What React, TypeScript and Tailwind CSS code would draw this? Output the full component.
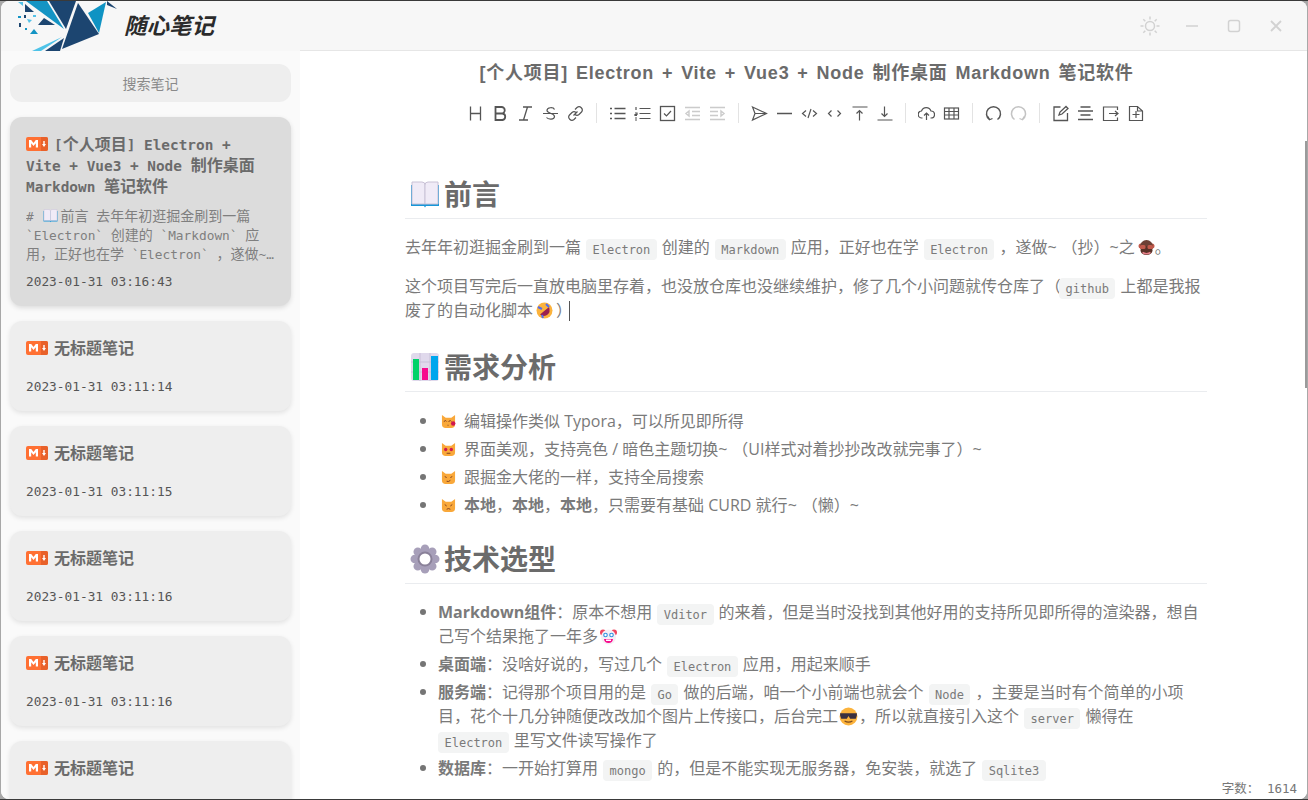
import React from "react";

const BODY = "font-['Open_Sans','Noto_Sans_CJK_SC',sans-serif]";
const MONO = "font-['DejaVu_Sans_Mono','Noto_Sans_CJK_SC',monospace]";

function Md({ className = "" }: { className?: string }) {
  return (
    <svg width="22" height="14" viewBox="0 0 22 14" className={`shrink-0 ${className}`}>
      <rect width="22" height="14" rx="2" fill="#ff7033" />
      <path d="M15 0h5a2 2 0 0 1 2 2v10a2 2 0 0 1-2 2h-5z" fill="#e8612a" />
      <path d="M3 10.500V3h2.200L7.500 6 9.800 3H12v7.500H9.800V6.300L7.500 9 5.200 6.300v4.200z" fill="#fff" />
      <path d="M18 4v3.500" stroke="#fff" strokeWidth="1.400" />
      <path d="M16 7h4l-2 3z" fill="#fff" />
    </svg>
  );
}

function Logo() {
  return (
    <svg width="120" height="50" viewBox="0 0 120 50" className="shrink-0">
      <polygon points="17,1 22,1 22,5" fill="#54c2e8" />
      <polygon points="25,0 46,0 63,28" fill="#1494c4" />
      <polygon points="48,0 75,0 65,28" fill="#1c4570" />
      <polygon points="77,2 98,33 61,48" fill="#1c4570" />
      <polygon points="87,12 105,1 98,32" fill="#0f93c3" />
      <polygon points="106,0 116,8 106,4" fill="#1c4570" />
      <polygon points="24,3 33,11 24,11" fill="#1c4570" />
      <polygon points="37,24 43,17 54,24" fill="#1c4570" />
      <polygon points="29,33 33,28 37,33" fill="#1494c4" />
      <polygon points="31,50 61,36 40,50" fill="#4fc3e8" />
      <polygon points="44,50 63,37 59,50" fill="#1c4570" />
      <polygon points="26,18 31,19 28,22" fill="#54c2e8" />
      <rect x="17" y="15" width="3" height="2" fill="#1494c4" />
      <rect x="23" y="14" width="2" height="3" fill="#1c4570" />
      <rect x="32" y="14" width="3" height="2" fill="#54c2e8" />
      <rect x="18" y="22" width="2" height="4" fill="#1c4570" />
      <rect x="24" y="27" width="2" height="2" fill="#1494c4" />
    </svg>
  );
}

function Book({ s = 30, className = "" }: { s?: number; className?: string }) {
  return (
    <svg width={s} height={s} viewBox="0 0 30 30" className={`inline-block shrink-0 ${className}`}>
      <path d="M1 6v21h13l1 1.500 1-1.500h13V6z" fill="#1896d8" />
      <path d="M2 3h10a3 3 0 0 1 3 3v19H2z" fill="#f0ebf7" stroke="#c9c2d6" />
      <path d="M28 3H18a3 3 0 0 0-3 3v19h13z" fill="#f0ebf7" stroke="#c9c2d6" />
    </svg>
  );
}
function Chart() {
  return (
    <svg width="30" height="30" viewBox="0 0 30 30" className="inline-block shrink-0">
      <rect x="1" y="1" width="28" height="28" rx="3" fill="#e0d9ec" />
      <path d="M1 10h28M1 20h28M10 1v28M20 1v28" stroke="#c9c0d8" />
      <rect x="3" y="7" width="6" height="21" fill="#00d26a" />
      <rect x="12" y="16" width="6" height="12" fill="#f70a8d" />
      <rect x="21" y="4" width="7" height="24" fill="#00a6ed" />
    </svg>
  );
}
function Gear() {
  const teeth = [0, 45, 90, 135, 180, 225, 270, 315];
  return (
    <svg width="30" height="30" viewBox="0 0 30 30" className="inline-block shrink-0">
      {teeth.map((a) => (
        <circle key={a} cx="15" cy="4.800" r="4.300" fill="#a79fb9" transform={`rotate(${a} 15 15)`} />
      ))}
      <circle cx="15" cy="15" r="10" fill="#a79fb9" />
      <circle cx="15" cy="15" r="7.500" fill="#8a8199" />
      <circle cx="15" cy="15" r="5.500" fill="#fff" />
    </svg>
  );
}
function Monkey() {
  return (
    <svg width="17" height="17" viewBox="0 0 17 17" className="ml-[3px] inline-block align-[-3px]">
      <circle cx="3" cy="7" r="2.500" fill="#c25a4c" />
      <circle cx="14" cy="7" r="2.500" fill="#c25a4c" />
      <circle cx="8.500" cy="7.500" r="6.500" fill="#6d4035" />
      <ellipse cx="8.500" cy="11.500" rx="6" ry="4.500" fill="#5a3228" />
      <path d="M4.500 13.500q4 2.500 8 0" stroke="#e8808a" strokeWidth="1.500" fill="none" />
      <rect x="2" y="6" width="5.500" height="4" rx="1.500" fill="#c25a4c" />
      <rect x="9.500" y="6" width="5.500" height="4" rx="1.500" fill="#c25a4c" />
    </svg>
  );
}
function Rofl() {
  return (
    <svg width="17" height="17" viewBox="0 0 17 17" className="mx-[3px] inline-block align-[-3px]">
      <circle cx="8.500" cy="8.500" r="8" fill="#fcb33c" />
      <path d="M4 12.500L13 5q2 5-2 8-4 2-7-.5z" fill="#9a2050" />
      <path d="M2 5l4 2M6 13l1 3M10 2l3 3" stroke="#4f6cf0" strokeWidth="2" />
    </svg>
  );
}
function Clown() {
  return (
    <svg width="17" height="17" viewBox="0 0 17 17" className="ml-[2px] inline-block align-[-3px]">
      <circle cx="3" cy="4.500" r="3" fill="#f0435e" />
      <circle cx="14" cy="4.500" r="3" fill="#f0435e" />
      <circle cx="8.500" cy="9" r="7.500" fill="#f6eef4" />
      <circle cx="5.500" cy="7" r="2.300" fill="#2f8fe0" />
      <circle cx="11.500" cy="7" r="2.300" fill="#2f8fe0" />
      <circle cx="5.500" cy="7" r="1.200" fill="#fff" />
      <circle cx="11.500" cy="7" r="1.200" fill="#fff" />
      <path d="M4 11h9q-.500 4-4.500 4T4 11z" fill="#f70a8d" />
      <rect x="6" y="11.500" width="5" height="1.500" fill="#fff" />
    </svg>
  );
}
function Cool() {
  return (
    <svg width="19" height="19" viewBox="0 0 17 17" className="mx-[1px] inline-block align-[-4px]">
      <circle cx="8.500" cy="8.500" r="8" fill="#fcb33c" />
      <path d="M1 5.500h15v2l-1 3H10L8.500 8 7 10.500H2L1 7.500z" fill="#3a3040" />
      <path d="M5 12.500q3.500 2 7 0" stroke="#7a4a20" fill="none" />
    </svg>
  );
}
function Cat({ face }: { face: "kiss" | "heart" | "smirk" | "pout" }) {
  return (
    <svg width="15" height="15" viewBox="0 0 16 16" className="shrink-0">
      <path d="M1 1l4 3h6l4-3v10a4 4 0 0 1-4 4H5a4 4 0 0 1-4-4z" fill="#f9a83a" />
      {face === "heart" ? (
        <>
          <circle cx="5" cy="8" r="1.800" fill="#d0184f" />
          <circle cx="11" cy="8" r="1.800" fill="#d0184f" />
          <path d="M6 12h4" stroke="#7a3a20" />
        </>
      ) : face === "kiss" ? (
        <>
          <path d="M3 8l2-1 1 1M8 8l2-1 1 1M7 12h1" stroke="#7a3a20" fill="none" />
          <circle cx="13" cy="10" r="2.400" fill="#d0184f" />
        </>
      ) : face === "smirk" ? (
        <path d="M4 7l2 1M10 8l2-1M6 12q2 1 4-1" stroke="#7a3a20" fill="none" />
      ) : (
        <path d="M4 7l2 1.500M12 7l-2 1.500M6 12q2-1.500 4 0" stroke="#7a3a20" fill="none" />
      )}
    </svg>
  );
}

const ic = "#555";
function Tool({ children, o = 1 }: { children: React.ReactNode; o?: number }) {
  return (
    <svg width="17" height="17" viewBox="0 0 17 17" fill="none" stroke={ic} strokeWidth="1.200" style={{ opacity: o }} className="shrink-0">
      {children}
    </svg>
  );
}
function Sep() {
  return <span className="mx-[12px] h-[20px] w-px shrink-0 bg-[#e3e3e3]" />;
}

const toolbar: React.ReactNode[][] = [
  [
    <Tool><path d="M3.500 1.500v14M13.500 1.500v14M3.500 8.500h10" strokeWidth="1.300" /></Tool>,
    <Tool><path d="M3.500 2h6a3 3 0 0 1 0 6.500h-6zM3.500 8.500h7a3.300 3.300 0 0 1 0 6.500h-7z" strokeWidth="1.800" /></Tool>,
    <Tool><path d="M6 2h9M2 15h9M10.500 2l-4 13" strokeWidth="1.300" /></Tool>,
    <Tool><path d="M1 8.500h15M12.500 4.500C11.500 2 5 2 5 5.500c0 3 7.500 2.500 7.500 6 0 3.500-6.500 3-8 1" /></Tool>,
    <Tool><path d="M6.500 10.500l4-4M8 4.500l2-2a3.200 3.200 0 0 1 4.500 4.500L12 9.500a3.200 3.200 0 0 1-4 0M9 12.500l-2 2A3.200 3.200 0 0 1 2.500 10L5 7.500a3.200 3.200 0 0 1 4 0" /></Tool>,
  ],
  [
    <Tool><path d="M5.500 3.500h11M5.500 8.500h11M5.500 13.500h11M1 3.500h2M1 8.500h2M1 13.500h2" strokeWidth="1.300" /></Tool>,
    <Tool><path d="M5.500 3.500h11M5.500 8.500h11M5.500 13.500h11M2 2v3M1 8h2v1.500H1v1h2M1 13h2M1 15h2" /></Tool>,
    <Tool><rect x="1.500" y="1.500" width="14" height="14" strokeWidth="1.300" /><path d="M5 8.500l2.500 2.500L12 6" /></Tool>,
    <Tool o={0.3}><path d="M1 2.500h15M8 6.500h8M8 10.500h8M1 14.500h15M5 6L2 8.500 5 11z" strokeWidth="1.400" /></Tool>,
    <Tool o={0.3}><path d="M1 2.500h15M1 6.500h8M1 10.500h8M1 14.500h15M12 6l3 2.500-3 2.500z" strokeWidth="1.400" /></Tool>,
  ],
  [
    <Tool><path d="M1.500 2L15.500 8.500 1.500 15 4 8.500zM4 8.500h11.500" /></Tool>,
    <Tool><path d="M1 8.500h15" strokeWidth="1.500" /></Tool>,
    <Tool><path d="M5 5.500L1.500 8.500 5 11.500M12 5.500l3.500 3-3.500 3M10 4l-3 9" /></Tool>,
    <Tool><path d="M5.500 5.500L2.500 8.500l3 3M11.500 5.500l3 3-3 3" /></Tool>,
    <Tool><path d="M1.500 2h15M8.500 15.500V5.500M5.500 8.500l3-3 3 3" /></Tool>,
    <Tool><path d="M1.500 15h15M8.500 1.500v10M5.500 8.500l3 3 3-3" /></Tool>,
  ],
  [
    <Tool><path d="M4.500 13H4a3.500 3.500 0 0 1-.5-7A5 5 0 0 1 13 6a3.500 3.500 0 0 1 0 7h-.5M8.500 15V8.500M6 10.500l2.500-2.500 2.500 2.500" /></Tool>,
    <Tool><rect x="1.500" y="3" width="14" height="11" /><path d="M1.500 6.500h14M1.500 10h14M6 3v11M11 3v11" /></Tool>,
  ],
  [
    <Tool><path d="M4.500 14.500A7 7 0 1 1 12.500 14.500" strokeWidth="1.500" /><path d="M3 11.500l1.500 3.200 3-1.200" /></Tool>,
    <Tool o={0.35}><path d="M4.500 14.500A7 7 0 1 1 12.500 14.500" strokeWidth="1.500" /><path d="M14 11.500l-1.500 3.200-3-1.200" /></Tool>,
  ],
  [
    <Tool><path d="M8.500 2H2v13.500h13.500V8M7 10l1-3 6-5.500 2 2L10 9z" strokeWidth="1.300" /></Tool>,
    <Tool><path d="M3.500 2h10M1 6h15M3.500 10h10M1 14.500h15" strokeWidth="1.300" /></Tool>,
    <Tool><path d="M15.500 5V2h-14v13.500h14v-3M7 8.500h9M13 6l3 2.500-3 2.500" /></Tool>,
    <Tool><path d="M10.500 1.500H2.500v14h13V6zM10.500 1.500V6h5M9 6v7M5.500 9.500h7" /></Tool>,
  ],
];

const Code = ({ children, m = "mx-[5px]" }: { children: React.ReactNode; m?: string }) => (
  <code className={`${m} rounded-[4px] bg-[#f3f4f4] px-[6.500px] py-[3.500px] font-['DejaVu_Sans_Mono',monospace] text-[12px] leading-none`}>{children}</code>
);

const Tilde = () => <span className="mr-[5px]">~</span>;

function H1({ icon, text, mt }: { icon: React.ReactNode; text: string; mt: string }) {
  return (
    <div className={`relative ${mt}`}>
      <span className="absolute left-[-28px] top-[-1px] text-[14px] leading-[20px] text-[#e8e8e8]">H1</span>
      <h1 className="flex h-[45px] items-center gap-[4px] border-b border-[#eaecef] pb-[5px] text-[28px] font-bold leading-[40px] text-[#6b6b6b]">
        <span className="ml-[5px] flex">{icon}</span>
        <span>{text}</span>
      </h1>
    </div>
  );
}

function Li({ children, icon }: { children: React.ReactNode; icon?: React.ReactNode }) {
  return (
    <li className="relative mb-[4px] pl-[33px] leading-[24px]">
      <span className="absolute left-[15px] top-[9px] h-[6px] w-[6px] rounded-full bg-[#757575]" />
      {icon ? (
        <span className="ml-[3px] flex items-center gap-[8px]">
          {icon}
          <span>{children}</span>
        </span>
      ) : (
        children
      )}
    </li>
  );
}

function Mix({ text, cjk }: { text: string; cjk: string }) {
  const parts = text.split(/([\u3000-\u9fff\uff00-\uffef]+)/);
  return (
    <>
      {parts.map((p, i) =>
        i % 2 === 1 ? (
          <span key={i} className={cjk}>
            {p}
          </span>
        ) : (
          <React.Fragment key={i}>{p}</React.Fragment>
        ),
      )}
    </>
  );
}

function NoteCard({ time }: { time: string }) {
  return (
    <div className="h-[90px] shrink-0 rounded-[12px] bg-[#eeeeee] px-[16px] pt-[16px] shadow-[0_2px_5px_rgba(0,0,0,0.1)]">
      <div className="flex h-[22px] items-center gap-[6px] text-[16px] font-bold text-[#6b6b6b]">
        <Md />
        <span>无标题笔记</span>
      </div>
      <div className={`mt-[19px] text-[12.800px] leading-[18px] text-[#555] ${MONO}`}>{time}</div>
    </div>
  );
}

export default function App() {
  return (
    <div className={`h-[800px] w-[1308px] overflow-hidden border-y border-[#3a3a3a] bg-[#a8a8a8] ${BODY}`}>
      <div className="ml-px flex h-[798px] w-[1306px] flex-col overflow-hidden rounded-[8px] bg-white text-[#7a7a7a]">
        {/* title bar */}
        <header className="flex h-[50px] shrink-0 items-center bg-[#f7f7f7]">
          <div className="flex h-[50px] w-[299px] shrink-0 items-center">
            <Logo />
            <span className="ml-[3px] text-[22.500px] font-bold italic text-[#2b2b2b]">随心笔记</span>
          </div>
          <div className="flex h-full flex-1 items-center justify-end border-b border-[#e6e6e6] pr-[24px]">
            <svg width="20" height="20" viewBox="0 0 20 20" fill="none" stroke="#d2d2d2" strokeWidth="1.500">
              <circle cx="10" cy="10" r="4.500" />
              <path d="M10 0.500v3M10 16.500v3M0.500 10h3M16.500 10h3M3.300 3.300l2 2M14.700 14.700l2 2M3.300 16.700l2-2M14.700 5.300l2-2" />
            </svg>
            <svg width="12" height="12" viewBox="0 0 12 12" fill="none" stroke="#d2d2d2" strokeWidth="1.500" className="ml-[26px]">
              <path d="M0 6h12" />
            </svg>
            <svg width="14" height="14" viewBox="0 0 14 14" fill="none" stroke="#d2d2d2" strokeWidth="1.500" className="ml-[29px]">
              <rect x="1.500" y="1.500" width="11" height="11" rx="2" />
            </svg>
            <svg width="14" height="14" viewBox="0 0 14 14" fill="none" stroke="#d2d2d2" strokeWidth="1.800" className="ml-[28px]">
              <path d="M2 2l10 10M12 2L2 12" />
            </svg>
          </div>
        </header>

        <div className="flex min-h-0 flex-1">
          {/* sidebar */}
          <aside className="flex w-[299px] shrink-0 flex-col gap-[15px] overflow-hidden bg-[#fafafa] px-[9px] pt-[13px]">
            <div className="flex h-[38px] shrink-0 items-center justify-center rounded-[12px] bg-[#eeeeee] text-[14px] text-[#8a8a8a]">
              搜索笔记
            </div>
            <div className="h-[189px] shrink-0 rounded-[12px] bg-[#dcdcdc] px-[16px] pt-[18px] shadow-[0_2px_5px_rgba(0,0,0,0.12)]">
              <div className={`pr-[4px] text-[14.400px] font-bold leading-[21px] text-[#6b6b6b] ${MONO}`}>
                <Md className="mr-[6px] inline-block align-[-1px]" />
                <Mix cjk="text-[16px] leading-none" text="[个人项目] Electron + Vite + Vue3 + Node 制作桌面 Markdown 笔记软件" />
              </div>
              <div className={`mt-[9px] line-clamp-3 text-[12.800px] leading-[19px] text-[#7f7f7f] ${MONO}`}>
                # <Book s={15} className="mx-[2px] align-[-2px]" />
                <Mix cjk="text-[14px] leading-none" text="前言 去年年初逛掘金刷到一篇 `Electron` 创建的 `Markdown` 应用，正好也在学 `Electron` ，遂做~（抄）~之。这个项目写完后一直放电脑里存着" />
              </div>
              <div className={`mt-[9px] text-[12.800px] leading-[18px] text-[#555] ${MONO}`}>2023-01-31 03:16:43</div>
            </div>
            <NoteCard time="2023-01-31 03:11:14" />
            <NoteCard time="2023-01-31 03:11:15" />
            <NoteCard time="2023-01-31 03:11:16" />
            <NoteCard time="2023-01-31 03:11:16" />
            <NoteCard time="2023-01-31 03:11:16" />
          </aside>

          {/* editor */}
          <main className="relative flex min-w-0 flex-1 flex-col overflow-hidden bg-white">
            <div className="flex h-[44px] shrink-0 items-center justify-center pl-[6px] font-['Liberation_Sans','Noto_Sans_CJK_SC',sans-serif] text-[18px] font-bold tracking-[0.75px] text-[#6b6b6b] [word-spacing:2.200px]">
              [个人项目] Electron + Vite + Vue3 + Node 制作桌面 Markdown 笔记软件
            </div>
            <div className="flex h-[36px] shrink-0 items-center justify-center pl-[4px]">
              {toolbar.map((g, i) => (
                <React.Fragment key={i}>
                  {i > 0 && <Sep />}
                  <div className="flex items-center gap-[8px]">
                    {g.map((t, j) => (
                      <React.Fragment key={j}>{t}</React.Fragment>
                    ))}
                  </div>
                </React.Fragment>
              ))}
            </div>

            <article className="ml-[105px] w-[802px] flex-1 overflow-hidden pt-[43px] text-[16px] leading-[24px]">
              <H1 mt="mt-0" icon={<Book />} text="前言" />
              <p className="mt-[16px]">
                去年年初逛掘金刷到一篇<Code>Electron</Code>创建的<Code>Markdown</Code>应用，正好也在学<Code>Electron</Code>，遂做<Tilde />（抄）~之<Monkey />。
              </p>
              <p className="mt-[15px]">
                这个项目写完后一直放电脑里存着，也没放仓库也没继续维护，修了几个小问题就传仓库了（<Code m="ml-[-2px] mr-[5px]">github</Code>上都是我报废了的自动化脚本<Rofl />）
                <span className="ml-[-3px] inline-block h-[20px] w-px bg-[#555] align-[-5px]" />
              </p>
              <H1 mt="mt-[25px]" icon={<Chart />} text="需求分析" />
              <ul className="mt-[17px]">
                <Li icon={<Cat face="kiss" />}>编辑操作类似 Typora，可以所见即所得</Li>
                <Li icon={<Cat face="heart" />}>界面美观，支持亮色 / 暗色主题切换<Tilde />（UI样式对着抄抄改改就完事了）~</Li>
                <Li icon={<Cat face="smirk" />}>跟掘金大佬的一样，支持全局搜索</Li>
                <Li icon={<Cat face="pout" />}><b>本地</b>，<b>本地</b>，<b>本地</b>，只需要有基础 CURD 就行<Tilde />（懒）~</Li>
              </ul>
              <H1 mt="mt-[22px]" icon={<Gear />} text="技术选型" />
              <ul className="mt-[16px]">
                <Li><b>Markdown组件</b>：原本不想用<Code>Vditor</Code>的来着，但是当时没找到其他好用的支持所见即所得的渲染器，想自己写个结果拖了一年多<Clown /></Li>
                <Li><b>桌面端</b>：没啥好说的，写过几个<Code>Electron</Code>应用，用起来顺手</Li>
                <Li><b>服务端</b>：记得那个项目用的是<Code>Go</Code>做的后端，咱一个小前端也就会个<Code>Node</Code>，主要是当时有个简单的小项目，花个十几分钟随便改改加个图片上传接口，后台完工<Cool />，所以就直接引入这个<Code>server</Code>懒得在<Code m="ml-0 mr-[5px]">Electron</Code>里写文件读写操作了</Li>
                <Li><b>数据库</b>：一开始打算用<Code>mongo</Code>的，但是不能实现无服务器，免安装，就选了<Code>Sqlite3</Code></Li>
              </ul>
            </article>

            <div className={`absolute bottom-0 right-0 bg-white pl-[4px] pr-[10px] text-[12.500px] leading-[20px] text-[#777] ${MONO}`}>字数： 1614</div>
            <div className="absolute right-0 top-[90px] h-[247px] w-[2px] bg-[#9b9b9b]" />
          </main>
        </div>
      </div>
    </div>
  );
}
